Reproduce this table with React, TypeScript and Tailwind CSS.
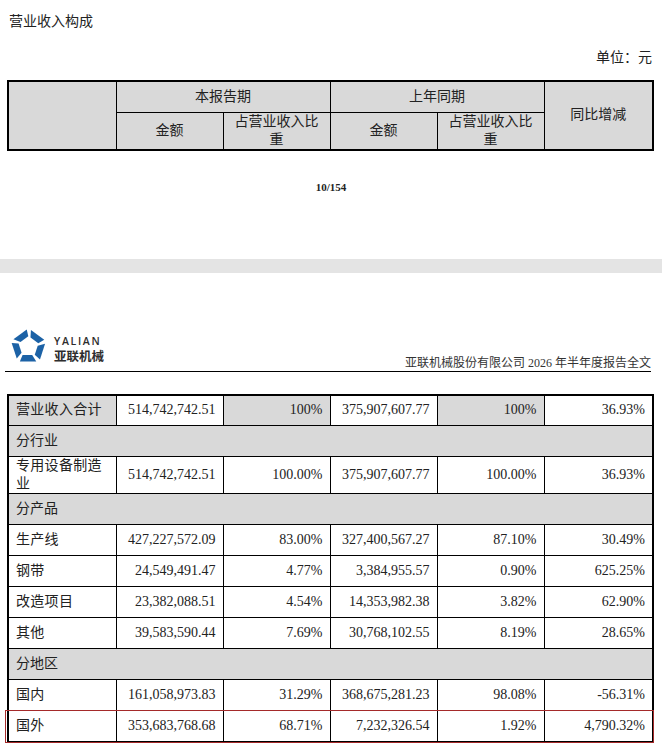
const FONT = "font-['Liberation_Serif','Noto_Sans_CJK_SC',serif]"

type Row =
  | { kind: "group"; label: string }
  | { kind: "data"; label: string; cells: string[]; total?: boolean; highlight?: boolean }

const rows: Row[] = [
  { kind: "data", label: "营业收入合计", cells: ["514,742,742.51", "100%", "375,907,607.77", "100%", "36.93%"], total: true },
  { kind: "group", label: "分行业" },
  { kind: "data", label: "专用设备制造业", cells: ["514,742,742.51", "100.00%", "375,907,607.77", "100.00%", "36.93%"] },
  { kind: "group", label: "分产品" },
  { kind: "data", label: "生产线", cells: ["427,227,572.09", "83.00%", "327,400,567.27", "87.10%", "30.49%"] },
  { kind: "data", label: "钢带", cells: ["24,549,491.47", "4.77%", "3,384,955.57", "0.90%", "625.25%"] },
  { kind: "data", label: "改造项目", cells: ["23,382,088.51", "4.54%", "14,353,982.38", "3.82%", "62.90%"] },
  { kind: "data", label: "其他", cells: ["39,583,590.44", "7.69%", "30,768,102.55", "8.19%", "28.65%"] },
  { kind: "group", label: "分地区" },
  { kind: "data", label: "国内", cells: ["161,058,973.83", "31.29%", "368,675,281.23", "98.08%", "-56.31%"] },
  { kind: "data", label: "国外", cells: ["353,683,768.68", "68.71%", "7,232,326.54", "1.92%", "4,790.32%"], highlight: true },
]

function Cols() {
  return (
    <colgroup>
      <col className="w-[108px]" />
      <col className="w-[107px]" />
      <col className="w-[107px]" />
      <col className="w-[107px]" />
      <col className="w-[107px]" />
      <col className="w-[109px]" />
    </colgroup>
  )
}

function Logo() {
  // pentagon ring split in five pinwheel pieces
  const cx = 17.5
  const cy = 18.6
  const ro = 18.4
  const ri = 10.5
  const pt = (r: number, deg: number) => {
    const a = (deg * Math.PI) / 180
    return [cx + r * Math.cos(a), cy + r * Math.sin(a)]
  }
  const lerp = (a: number[], b: number[], t: number) => [a[0] + (b[0] - a[0]) * t, a[1] + (b[1] - a[1]) * t]
  const pieces = [0, 1, 2, 3, 4].map((i) => {
    const a0 = -90 + i * 72
    const a1 = a0 + 72
    const o0 = pt(ro, a0)
    const o1 = pt(ro, a1)
    const i0 = pt(ri, a0)
    const i1 = pt(ri, a1)
    const p = [lerp(o0, o1, 0.14), lerp(o0, o1, 0.9), lerp(i0, i1, 0.98), lerp(i0, i1, 0.2)]
    return p.map((q) => q[0].toFixed(2) + "," + q[1].toFixed(2)).join(" ")
  })
  return (
    <div className="mb-[7px] flex items-start gap-[8px]">
      <svg width="35" height="35" viewBox="0 0 35 35">
        {pieces.map((p, i) => (
          <polygon key={i} points={p} fill="#1c62a6" />
        ))}
      </svg>
      <div className="flex flex-col gap-[1px] pt-[7px]">
        <span className="font-['Open_Sans',sans-serif] text-[10.5px] leading-[12px] font-semibold tracking-[1.7px] text-[#2d2d2d]">
          YALIAN
        </span>
        <span className="font-['Noto_Sans_CJK_SC',sans-serif] text-[12.5px] leading-[15px] font-bold text-[#2d2d2d]">
          亚联机械
        </span>
      </div>
    </div>
  )
}

export default function App() {
  return (
    <div className={`w-[662px] min-h-[754px] bg-white text-[#222] ${FONT}`}>
      {/* first page tail */}
      <div className="pt-[12px]">
        <div className="pl-[9px] text-[14px] leading-[20px]">营业收入构成</div>
        <div className="mt-[16px] pr-[10px] text-right text-[14px] leading-[20px]">单位：元</div>
        <table className="mt-[12px] ml-[7px] w-[645px] table-fixed border-collapse border-2 border-black text-[14px] leading-[18px]">
          <Cols />
          <tbody>
            <tr className="h-[31px] bg-[#d9d9d9]">
              <td rowSpan={2} className="border border-black" />
              <td colSpan={2} className="border border-black text-center">本报告期</td>
              <td colSpan={2} className="border border-black text-center">上年同期</td>
              <td rowSpan={2} className="border border-black text-center">同比增减</td>
            </tr>
            <tr className="h-[37px] bg-[#d9d9d9]">
              <td className="border border-black text-center">金额</td>
              <td className="border border-black px-[6px] text-center">占营业收入比重</td>
              <td className="border border-black text-center">金额</td>
              <td className="border border-black px-[6px] text-center">占营业收入比重</td>
            </tr>
          </tbody>
        </table>
        <div className="mt-[29px] text-center text-[11px] leading-[14px] font-bold">10/154</div>
      </div>

      {/* page gap */}
      <div className="mt-[65px] h-[14px] bg-[#e4e4e4]" />

      {/* second page */}
      <div className="pt-[55px]">
        <div className="ml-[5px] flex w-[646px] items-end justify-between border-b border-black pb-[1px] pl-[6px]">
          <Logo />
          <div className="text-[12px] leading-[14px] text-[#333]">亚联机械股份有限公司 2026 年半年度报告全文</div>
        </div>

        <table className="mt-[22px] ml-[7px] w-[645px] table-fixed border-collapse border-2 border-black text-[14px] leading-[18px]">
          <Cols />
          <tbody>
            {rows.map((r, idx) =>
              r.kind === "group" ? (
                <tr key={idx} className="h-[31px] bg-[#d9d9d9]">
                  <td colSpan={6} className="border border-black pl-[7px]">{r.label}</td>
                </tr>
              ) : (
                <tr key={idx} className="h-[31px]">
                  <td className={`relative border border-black pl-[7px] pr-[5px] tracking-[0.3px] ${r.total ? "bg-[#d9d9d9]" : ""}`}>
                    {r.label}
                    {r.highlight && (
                      <div className="pointer-events-none absolute -left-[4px] -top-[1px] -bottom-[2px] w-[649px] border-[1.5px] border-[#a52a2a]" />
                    )}
                  </td>
                  {r.cells.map((c, j) => (
                    <td
                      key={j}
                      className={`border border-black pr-[7px] text-right ${r.total && (j === 1 || j === 3) ? "bg-[#d9d9d9]" : ""}`}
                    >
                      {c}
                    </td>
                  ))}
                </tr>
              )
            )}
          </tbody>
        </table>
      </div>
    </div>
  )
}
